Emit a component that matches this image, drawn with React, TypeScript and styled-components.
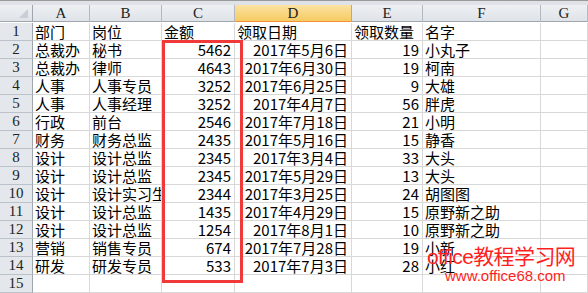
import React from "react";
import styled, { createGlobalStyle } from "styled-components";

const GlobalStyle = createGlobalStyle`
  html, body {
    margin: 0;
    padding: 0;
    background: #ffffff;
    overflow: hidden;
  }
`;

const COLS = ["A", "B", "C", "D", "E", "F", "G"];
const GRID = "33px 57px 72px 73px 117px 71px 118px 1fr";

type Row = [string, string, number, string, number, string];

const rows: Row[] = [
  ["总裁办", "秘书", 5462, "2017年5月6日", 19, "小丸子"],
  ["总裁办", "律师", 4643, "2017年6月30日", 19, "柯南"],
  ["人事", "人事专员", 3252, "2017年6月25日", 9, "大雄"],
  ["人事", "人事经理", 3252, "2017年4月7日", 56, "胖虎"],
  ["行政", "前台", 2546, "2017年7月18日", 21, "小明"],
  ["财务", "财务总监", 2435, "2017年5月16日", 15, "静香"],
  ["设计", "设计总监", 2345, "2017年3月4日", 33, "大头"],
  ["设计", "设计总监", 2345, "2017年5月29日", 13, "大头"],
  ["设计", "设计实习生", 2344, "2017年3月25日", 24, "胡图图"],
  ["设计", "设计总监", 1435, "2017年4月29日", 15, "原野新之助"],
  ["设计", "设计总监", 1254, "2017年8月1日", 10, "原野新之助"],
  ["营销", "销售专员", 674, "2017年7月28日", 19, "小新"],
  ["研发", "研发专员", 533, "2017年7月3日", 28, "小红"],
];

const App: React.FC = () => {
  return (
    <>
      <GlobalStyle />
      <Page>
        <FormulaBar>
          <NameBox>
            <NameText>B20</NameText>
          </NameBox>
          <FxButton>
            <FxText>fx</FxText>
          </FxButton>
          <FormulaInput />
        </FormulaBar>
        <Sheet>
          <Grid>
            <Corner>
              <CornerTriangle />
            </Corner>
            {COLS.map((c) => (
              <ColHeader key={c} $selected={c === "D"}>
                {c}
              </ColHeader>
            ))}

            <RowHeader>1</RowHeader>
            <Cell>部门</Cell>
            <Cell>岗位</Cell>
            <Cell>金额</Cell>
            <Cell>领取日期</Cell>
            <Cell>领取数量</Cell>
            <Cell>名字</Cell>
            <Cell />

            {rows.map((r, i) => (
              <React.Fragment key={i}>
                <RowHeader>{i + 2}</RowHeader>
                <Cell>{r[0]}</Cell>
                <Cell>{r[1]}</Cell>
                <Cell $right>{r[2]}</Cell>
                <Cell $right>{r[3]}</Cell>
                <Cell $right>{r[4]}</Cell>
                <Cell>{r[5]}</Cell>
                <Cell />
              </React.Fragment>
            ))}

            <RowHeader>15</RowHeader>
            {COLS.map((c) => (
              <Cell key={c} />
            ))}
          </Grid>

          <Highlight />
          <Watermark>
            <WatermarkTitle>office教程学习网</WatermarkTitle>
            <WatermarkUrl>www.office68.com</WatermarkUrl>
          </Watermark>
        </Sheet>
      </Page>
    </>
  );
};

const Page = styled.div`
  width: 588px;
  height: 293px;
  overflow: hidden;
  background: #dfe3e8;
  display: flex;
  flex-direction: column;
`;

const FormulaBar = styled.div`
  height: 6px;
  display: flex;
  border-bottom: 1px solid #9a9a9a;
  overflow: hidden;
  margin-bottom: 4px;
  background: #ffffff;
`;

const NameBox = styled.div`
  width: 160px;
  position: relative;
  overflow: hidden;
  background: #ffffff;
`;

const NameText = styled.div`
  position: absolute;
  left: 58px;
  top: -9px;
  font-family: "Liberation Serif", serif;
  font-size: 15px;
  color: #000;
`;

const FxButton = styled.div`
  width: 75px;
  position: relative;
  background: linear-gradient(#e9ecef, #d8dde3);
  border-radius: 0 0 14px 14px;
  border: 1px solid #b9bec4;
  border-top: none;
  box-sizing: border-box;
  margin-right: 2px;
`;

const FxText = styled.div`
  position: absolute;
  right: 6px;
  top: -9px;
  font-family: "Liberation Serif", serif;
  font-style: italic;
  font-weight: bold;
  font-size: 13px;
  color: #333;
`;

const FormulaInput = styled.div`
  flex: 1;
  background: #ffffff;
  border-left: 1px solid #9a9a9a;
`;

const Sheet = styled.div`
  position: relative;
  flex: 1;
  background: #ffffff;
`;

const Grid = styled.div`
  display: grid;
  grid-template-columns: ${GRID};
  grid-auto-rows: 18px;
`;

const headerBase = `
  box-sizing: border-box;
  display: flex;
  align-items: flex-end;
  justify-content: center;
  font-family: "Liberation Serif", "Noto Sans CJK SC", serif;
  font-size: 15px;
  line-height: 16px;
  color: #222;
`;

const Corner = styled.div`
  ${headerBase}
  background: linear-gradient(#eef0f3, #dfe3e8);
  border-right: 1px solid #9fa6ae;
  border-bottom: 1px solid #9fa6ae;
  height: 17px;
  position: relative;
`;

const CornerTriangle = styled.div`
  position: absolute;
  right: 4px;
  bottom: 3px;
  width: 0;
  height: 0;
  border-left: 9px solid transparent;
  border-bottom: 9px solid #c9ced4;
`;

const ColHeader = styled.div<{ $selected?: boolean }>`
  ${headerBase}
  height: 17px;
  background: ${(p) =>
    p.$selected
      ? "linear-gradient(#fbe3a2, #f6cb62)"
      : "linear-gradient(#eef0f3, #dfe3e8)"};
  border-right: 1px solid ${(p) => (p.$selected ? "#e3a343" : "#b3b9c0")};
  border-bottom: 1px solid ${(p) => (p.$selected ? "#f29436" : "#9fa6ae")};
`;

const RowHeader = styled.div`
  ${headerBase}
  background: #e4e8ed;
  border-right: 1px solid #9fa6ae;
  border-bottom: 1px solid #bcc2c9;
  padding-bottom: 1px;
`;

const Cell = styled.div<{ $right?: boolean }>`
  box-sizing: border-box;
  display: flex;
  align-items: flex-end;
  justify-content: ${(p) => (p.$right ? "flex-end" : "flex-start")};
  padding: 0 3px 0 2px;
  border-right: 1px solid #d8d8d8;
  border-bottom: 1px solid #d8d8d8;
  font-family: "Noto Sans CJK SC", sans-serif;
  font-size: 15px;
  line-height: 17px;
  color: #000;
  white-space: nowrap;
  overflow: hidden;
`;

const Highlight = styled.div`
  position: absolute;
  left: 162px;
  top: 35px;
  width: 81px;
  height: 243px;
  box-sizing: border-box;
  border: 3px solid #f03a3a;
  pointer-events: none;
`;

const Watermark = styled.div`
  position: absolute;
  left: 427px;
  top: 240px;
  display: flex;
  flex-direction: column;
  align-items: flex-start;
  color: #ff1f1f;
  font-family: "Liberation Sans", "Noto Sans CJK SC", sans-serif;
`;

const WatermarkTitle = styled.div`
  font-size: 21px;
  line-height: 23px;
  letter-spacing: -0.6px;
`;

const WatermarkUrl = styled.div`
  font-size: 15px;
  line-height: 15px;
  margin-left: 18px;
`;

export default App;
